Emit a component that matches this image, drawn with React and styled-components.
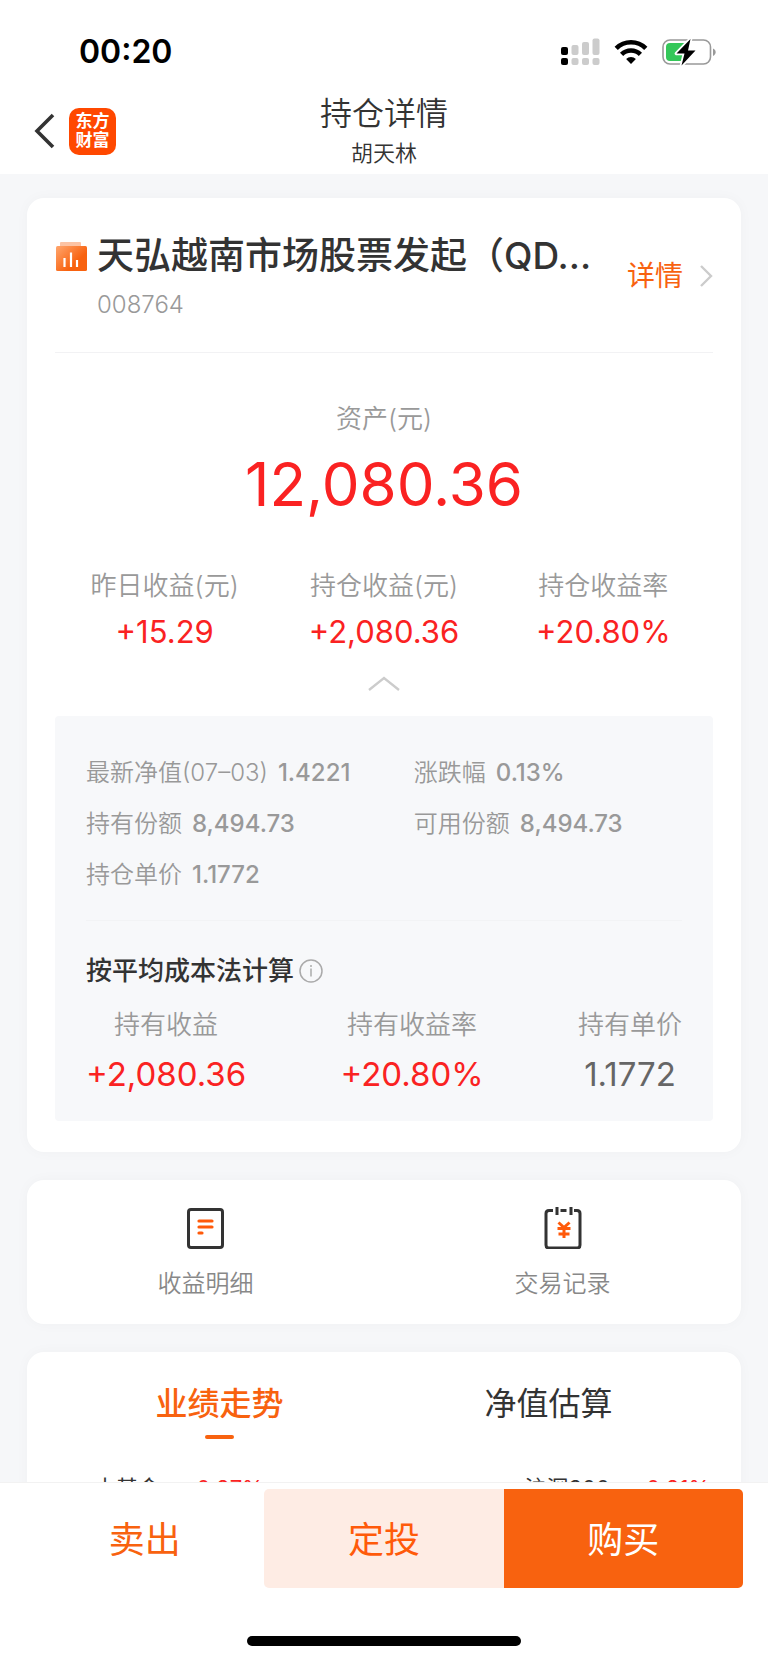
import React, { useState } from 'react';
import styled, { createGlobalStyle } from 'styled-components';

const GlobalStyle = createGlobalStyle`
    * {
      box-sizing: border-box;
    }

    body {
      margin: 0;
      background: #fff;
      color: #333;
      font-family: Inter, "Noto Sans CJK SC", sans-serif;
    }

    h1, h2, h3, p, dl, dt, dd {
      margin: 0;
      font-weight: inherit;
    }

    button {
      margin: 0;
      padding: 0;
      border: 0;
      background: none;
      color: inherit;
      font: inherit;
      cursor: pointer;
    }

    a {
      color: inherit;
      text-decoration: none;
    }

    svg {
      display: block;
      flex: none;
    }
`;

const Screen = styled.div`
    display: flex;
    flex-direction: column;
    height: 100vh;
`;

const StatusBar = styled.div`
    display: flex;
    align-items: center;
    justify-content: space-between;
    padding: 16px 51px 0 79px;
    height: 88px;
`;

const Clock = styled.time`
    color: #000;
    font-size: 32px;
    font-weight: 600;
    line-height: 40px;
`;

const StatusIcons = styled.div`
    display: flex;
    align-items: center;
    gap: 14px;
`;

const Header = styled.header`
    display: grid;
    grid-template-columns: 1fr auto 1fr;
    align-items: center;
    padding: 4px 34px;
`;

const HeaderLeft = styled.div`
    display: flex;
    align-items: center;
    gap: 14px;
`;

const Logo = styled.a`
    display: grid;
    grid-template-columns: 17px 17px;
    place-content: center;
    width: 47px;
    height: 47px;
    border-radius: 10px;
    background: #ff4800;
    color: #fff;
    font-size: 17px;
    font-weight: 700;
    line-height: 19px;
`;

const HeaderTitle = styled.div`
    font-weight: 350;
    text-align: center;

    h1 {
      font-size: 32px;
      line-height: 44px;
    }

    p {
      font-size: 22px;
      line-height: 34px;
    }
`;

const Content = styled.main`
    display: flex;
    flex: 1;
    flex-direction: column;
    gap: 28px;
    min-height: 0;
    padding: 24px 27px;
    overflow-y: auto;
    scrollbar-width: none;
    background: #f6f7f9;
`;

const Card = styled.section`
    flex: none;
    padding: 0 28px;
    border-radius: 17px;
    background: #fff;
    box-shadow: 0 0 14px rgba(0, 0, 0, 0.03);
`;

const FundRow = styled.div`
    display: flex;
    align-items: center;
    padding: 34px 0 32px;
    border-bottom: 1px solid #f2f2f4;
`;

const FundInfo = styled.div`
    display: grid;
    flex: 1;
    grid-template-columns: 32px 1fr;
    column-gap: 10px;
    row-gap: 10px;
    align-items: center;
    min-width: 0;
`;

const FundName = styled.h2`
    font-size: 37px;
    font-weight: 500;
    line-height: 48px;
    white-space: nowrap;
`;

const FundCode = styled.p`
    grid-column: 2;
    color: #999;
    font-size: 24px;
    font-weight: 350;
    line-height: 30px;
`;

const DetailLink = styled.a`
    display: flex;
    align-items: center;
    gap: 16px;
    margin-left: 28px;
    color: #f8620f;
    font-size: 28px;
    line-height: 40px;
`;

const Asset = styled.dl`
    padding: 48px 0;
    text-align: center;
`;

const Label = styled.dt`
    color: #999;
    font-size: 26px;
    font-weight: 350;
    line-height: 36px;
`;

const AssetValue = styled.dd`
    padding-top: 11px;
    color: #fa2222;
    font-size: 60px;
    line-height: 72px;
`;

const Profits = styled.dl`
    display: grid;
    grid-template-columns: repeat(3, 1fr);
    text-align: center;
`;

const ProfitValue = styled.dd`
    padding-top: 8px;
    color: #fa2222;
    font-size: 31px;
    line-height: 40px;
`;

const Toggle = styled.button`
    display: flex;
    align-items: center;
    justify-content: center;
    width: 100%;
    height: 64px;
`;

const Panel = styled.div`
    margin-bottom: 31px;
    padding: 31px 31px 25px;
    border-radius: 4px;
    background: #f7f8fa;
`;

const Facts = styled.dl`
    display: grid;
    grid-template-columns: 55% 45%;
    padding-bottom: 20px;
    border-bottom: 1px solid #f2f3f5;
`;

const Fact = styled.div`
    display: flex;
    gap: 10px;
    color: #999;
    font-size: 24px;
    line-height: 51px;
    white-space: nowrap;

    dt {
      font-weight: 350;
    }

    dd {
      font-weight: 500;
    }
`;

const CostTitle = styled.div`
    display: flex;
    align-items: center;
    gap: 5px;
    padding: 30px 0 16px;

    h3 {
      font-size: 26px;
      font-weight: 500;
      line-height: 40px;
    }
`;

const Costs = styled.dl`
    display: flex;
    justify-content: space-between;
    text-align: center;
`;

const CostValue = styled.dd`
    padding-top: 9px;
    color: ${props => props.$plain ? '#666' : '#fa2222'};
    font-size: 33px;
    line-height: 44px;
`;

const Shortcuts = styled(Card)`
    display: grid;
    grid-template-columns: 1fr 1fr;
    padding: 27px 0 22px;
`;

const Shortcut = styled.a`
    display: flex;
    flex-direction: column;
    align-items: center;
    gap: 17px;
    color: #888;
    font-size: 24px;
    font-weight: 350;
    line-height: 36px;
`;

const Tabs = styled.div`
    display: grid;
    grid-template-columns: 1fr 1fr;
    padding: 28px 0 33px;
`;

const Tab = styled.button`
    display: flex;
    flex-direction: column;
    align-items: center;
    gap: 7px;
    color: ${props => props.$active ? '#f8620f' : '#333'};
    font-size: 32px;
    font-weight: ${props => props.$active ? 500 : 400};
    line-height: 48px;

    &::after {
      content: "";
      width: 29px;
      height: 4px;
      border-radius: 2px;
      background: ${props => props.$active ? '#f8620f' : 'transparent'};
    }
`;

const Legend = styled.div`
    display: flex;
    justify-content: space-between;
    padding: 0 3px 24px 39px;
    font-size: 22px;
    line-height: 32px;

    p {
      display: flex;
      gap: 22px;
    }

    span {
      color: #fa2222;
    }
`;

const Footer = styled.footer`
    display: flex;
    flex-direction: column;
    align-items: center;
    gap: 48px;
    padding: 6px 25px 17px;
    border-top: 1px solid #f2f2f2;
    background: #fff;
`;

const Actions = styled.div`
    display: grid;
    grid-template-columns: repeat(3, 1fr);
    width: 100%;
    border-radius: 5px;
    overflow: hidden;
`;

const tones = {
  plain: 'background: #fff; color: #f8620f;',
  soft: 'background: #feece4; color: #ff5a0a; border-radius: 5px 0 0 5px;',
  solid: 'background: #f8620f; color: #fff;',
};

const Action = styled.button`
    height: 99px;
    padding-top: 2px;
    font-size: 36px;
    line-height: 48px;
    ${props => tones[props.$tone]}
`;

const HomeIndicator = styled.div`
    width: 50%;
    max-width: 274px;
    height: 10px;
    border-radius: 5px;
    background: #000;
`;

const SignalIcon = () => (
  <svg width="39" height="28" viewBox="0 0 39 28">
    <g fill="#000">
      <rect x="0" y="9" width="7" height="8" rx="2" />
      <rect x="0" y="20" width="7" height="7" rx="2" />
    </g>
    <g fill="#ccc">
      <rect x="10.5" y="7" width="7" height="10" rx="2" />
      <rect x="10.5" y="20" width="7" height="7" rx="2" />
      <rect x="21" y="4" width="7" height="13" rx="2" />
      <rect x="21" y="20" width="7" height="7" rx="2" />
      <rect x="31.5" y="0.5" width="7" height="16.5" rx="2" />
      <rect x="31.5" y="20" width="7" height="7" rx="2" />
    </g>
  </svg>
);

const WifiIcon = () => (
  <svg width="34" height="26" viewBox="0 0 34 26" fill="none" stroke="#000" strokeWidth="4.6">
    <path d="M2.2 9.4a21 21 0 0 1 29.6 0" />
    <path d="M7.6 15.3a13.4 13.4 0 0 1 18.8 0" />
    <path d="M17 25l-4.9-5a7 7 0 0 1 9.8 0z" fill="#000" stroke="none" />
  </svg>
);

const BatteryIcon = () => (
  <svg width="55" height="28" viewBox="0 0 55 28">
    <rect x="1" y="2" width="47.5" height="24" rx="7" fill="none" stroke="#999" strokeWidth="1.6" />
    <path d="M51 10.5c3.6 1.4 3.6 6 0 7.4z" fill="#999" />
    <path d="M8 5h17v18H8a4 4 0 0 1-4-4V9a4 4 0 0 1 4-4z" fill="#34c759" />
    <path d="M28.5 1L14.5 15.5h8L19.5 27.5 33.5 12.5h-7.5z" fill="#000" stroke="#fff" strokeWidth="3.6" paintOrder="stroke" strokeLinejoin="round" />
  </svg>
);

const BackIcon = () => (
  <svg width="21" height="36" viewBox="0 0 21 36" fill="none" stroke="#333" strokeWidth="3.6">
    <path d="M19 2L3 18l16 16" />
  </svg>
);

const FundIcon = () => (
  <svg width="32" height="30" viewBox="0 0 32 30">
    <defs>
      <linearGradient id="fund" x1="0" y1="0" x2="0.7" y2="0.6">
        <stop offset="0" stopColor="#ffa66e" />
        <stop offset="1" stopColor="#f8620f" />
      </linearGradient>
    </defs>
    <path d="M5 5V2q0-1 1-1h19q1 0 1 1v3z" fill="#fcc3a4" />
    <rect x="1" y="5" width="31" height="25" rx="1.5" fill="url(#fund)" />
    <path d="M9.5 17v9M16 11.5V26M22 19v7" stroke="#fff" strokeWidth="2.2" />
  </svg>
);

const MoreIcon = () => (
  <svg width="14" height="24" viewBox="0 0 14 24" fill="none" stroke="#ccc" strokeWidth="2.4">
    <path d="M2 2l10 10L2 22" />
  </svg>
);

const CollapseIcon = ({ open }) => (
  <svg width="32" height="16" viewBox="0 0 32 16" fill="none" stroke="#ccc" strokeWidth="2.4">
    <path d={open ? 'M1 14L16 2l15 12' : 'M1 2l15 12L31 2'} />
  </svg>
);

const InfoIcon = () => (
  <svg width="24" height="24" viewBox="0 0 24 24" fill="none" stroke="#aaa" strokeWidth="1.5">
    <circle cx="12" cy="12" r="11" />
    <path d="M12 9.5v8M12 6v2" />
  </svg>
);

const ProfitIcon = () => (
  <svg width="38" height="42" viewBox="0 0 38 42" fill="none">
    <rect x="1.5" y="2.5" width="34" height="38" rx="2.5" stroke="#333" strokeWidth="3" />
    <path d="M12 14h13M12 20h13M12 26h3" stroke="#ff5a0a" strokeWidth="3.2" strokeLinecap="round" />
  </svg>
);

const RecordIcon = () => (
  <svg width="38" height="42" viewBox="0 0 38 42" fill="none" stroke="#333" strokeWidth="3">
    <path d="M9 3.5H5Q2 3.5 2 6.5V38Q2 41 5 41H33Q36 41 36 38V6.5Q36 3.5 33 3.5H30" />
    <path d="M16.5 3.5h6M13 0v8M27 0v8" />
    <path d="M14.5 15.5L20 20.5 25.5 15.5M13.5 21.5h13M14.5 27h11M20 21v10" stroke="#ff5a0a" />
  </svg>
);

const profits = [
  { label: '昨日收益(元)', value: '+15.29' },
  { label: '持仓收益(元)', value: '+2,080.36' },
  { label: '持仓收益率', value: '+20.80%' },
];

const facts = [
  { label: '最新净值(07–03)', value: '1.4221' },
  { label: '涨跌幅', value: '0.13%' },
  { label: '持有份额', value: '8,494.73' },
  { label: '可用份额', value: '8,494.73' },
  { label: '持仓单价', value: '1.1772' },
];

const costs = [
  { label: '持有收益', value: '+2,080.36' },
  { label: '持有收益率', value: '+20.80%' },
  { label: '持有单价', value: '1.1772', plain: true },
];

const tabs = ['业绩走势', '净值估算'];

function App() {

    const [open, setOpen] = useState(true);
    const [tab, setTab] = useState(0);

    return (
      <Screen>
        <GlobalStyle />
        <StatusBar>
          <Clock>00:20</Clock>
          <StatusIcons>
            <SignalIcon />
            <WifiIcon />
            <BatteryIcon />
          </StatusIcons>
        </StatusBar>

        <Header>
          <HeaderLeft>
            <button aria-label="返回"><BackIcon /></button>
            <Logo href="#home">
              <span>东</span><span>方</span><span>财</span><span>富</span>
            </Logo>
          </HeaderLeft>
          <HeaderTitle>
            <h1>持仓详情</h1>
            <p>胡天林</p>
          </HeaderTitle>
        </Header>

        <Content>
          <Card>
            <FundRow>
              <FundInfo>
                <FundIcon />
                <FundName>天弘越南市场股票发起（QD...</FundName>
                <FundCode>008764</FundCode>
              </FundInfo>
              <DetailLink href="#detail">详情<MoreIcon /></DetailLink>
            </FundRow>

            <Asset>
              <Label>资产(元)</Label>
              <AssetValue>12,080.36</AssetValue>
            </Asset>

            <Profits>
              {profits.map((item) => (
                <div key={item.label}>
                  <Label>{item.label}</Label>
                  <ProfitValue>{item.value}</ProfitValue>
                </div>
              ))}
            </Profits>

            <Toggle aria-label="展开收起" aria-expanded={open} onClick={() => setOpen(!open)}>
              <CollapseIcon open={open} />
            </Toggle>

            {open && (
              <Panel>
                <Facts>
                  {facts.map((item) => (
                    <Fact key={item.label}>
                      <dt>{item.label}</dt>
                      <dd>{item.value}</dd>
                    </Fact>
                  ))}
                </Facts>
                <CostTitle>
                  <h3>按平均成本法计算</h3>
                  <button aria-label="说明"><InfoIcon /></button>
                </CostTitle>
                <Costs>
                  {costs.map((item) => (
                    <div key={item.label}>
                      <Label>{item.label}</Label>
                      <CostValue $plain={item.plain}>{item.value}</CostValue>
                    </div>
                  ))}
                </Costs>
              </Panel>
            )}
          </Card>

          <Shortcuts>
            <Shortcut href="#profit"><ProfitIcon />收益明细</Shortcut>
            <Shortcut href="#records"><RecordIcon />交易记录</Shortcut>
          </Shortcuts>

          <Card>
            <Tabs role="tablist">
              {tabs.map((name, i) => (
                <Tab key={name} role="tab" aria-selected={tab === i} $active={tab === i} onClick={() => setTab(i)}>
                  {name}
                </Tab>
              ))}
            </Tabs>
            <Legend>
              <p>本基金 <span>+0.27%</span></p>
              <p>沪深300 <span>+0.21%</span></p>
            </Legend>
          </Card>
        </Content>

        <Footer>
          <Actions>
            <Action $tone="plain">卖出</Action>
            <Action $tone="soft">定投</Action>
            <Action $tone="solid">购买</Action>
          </Actions>
          <HomeIndicator />
        </Footer>
      </Screen>
    )
}

export default App
